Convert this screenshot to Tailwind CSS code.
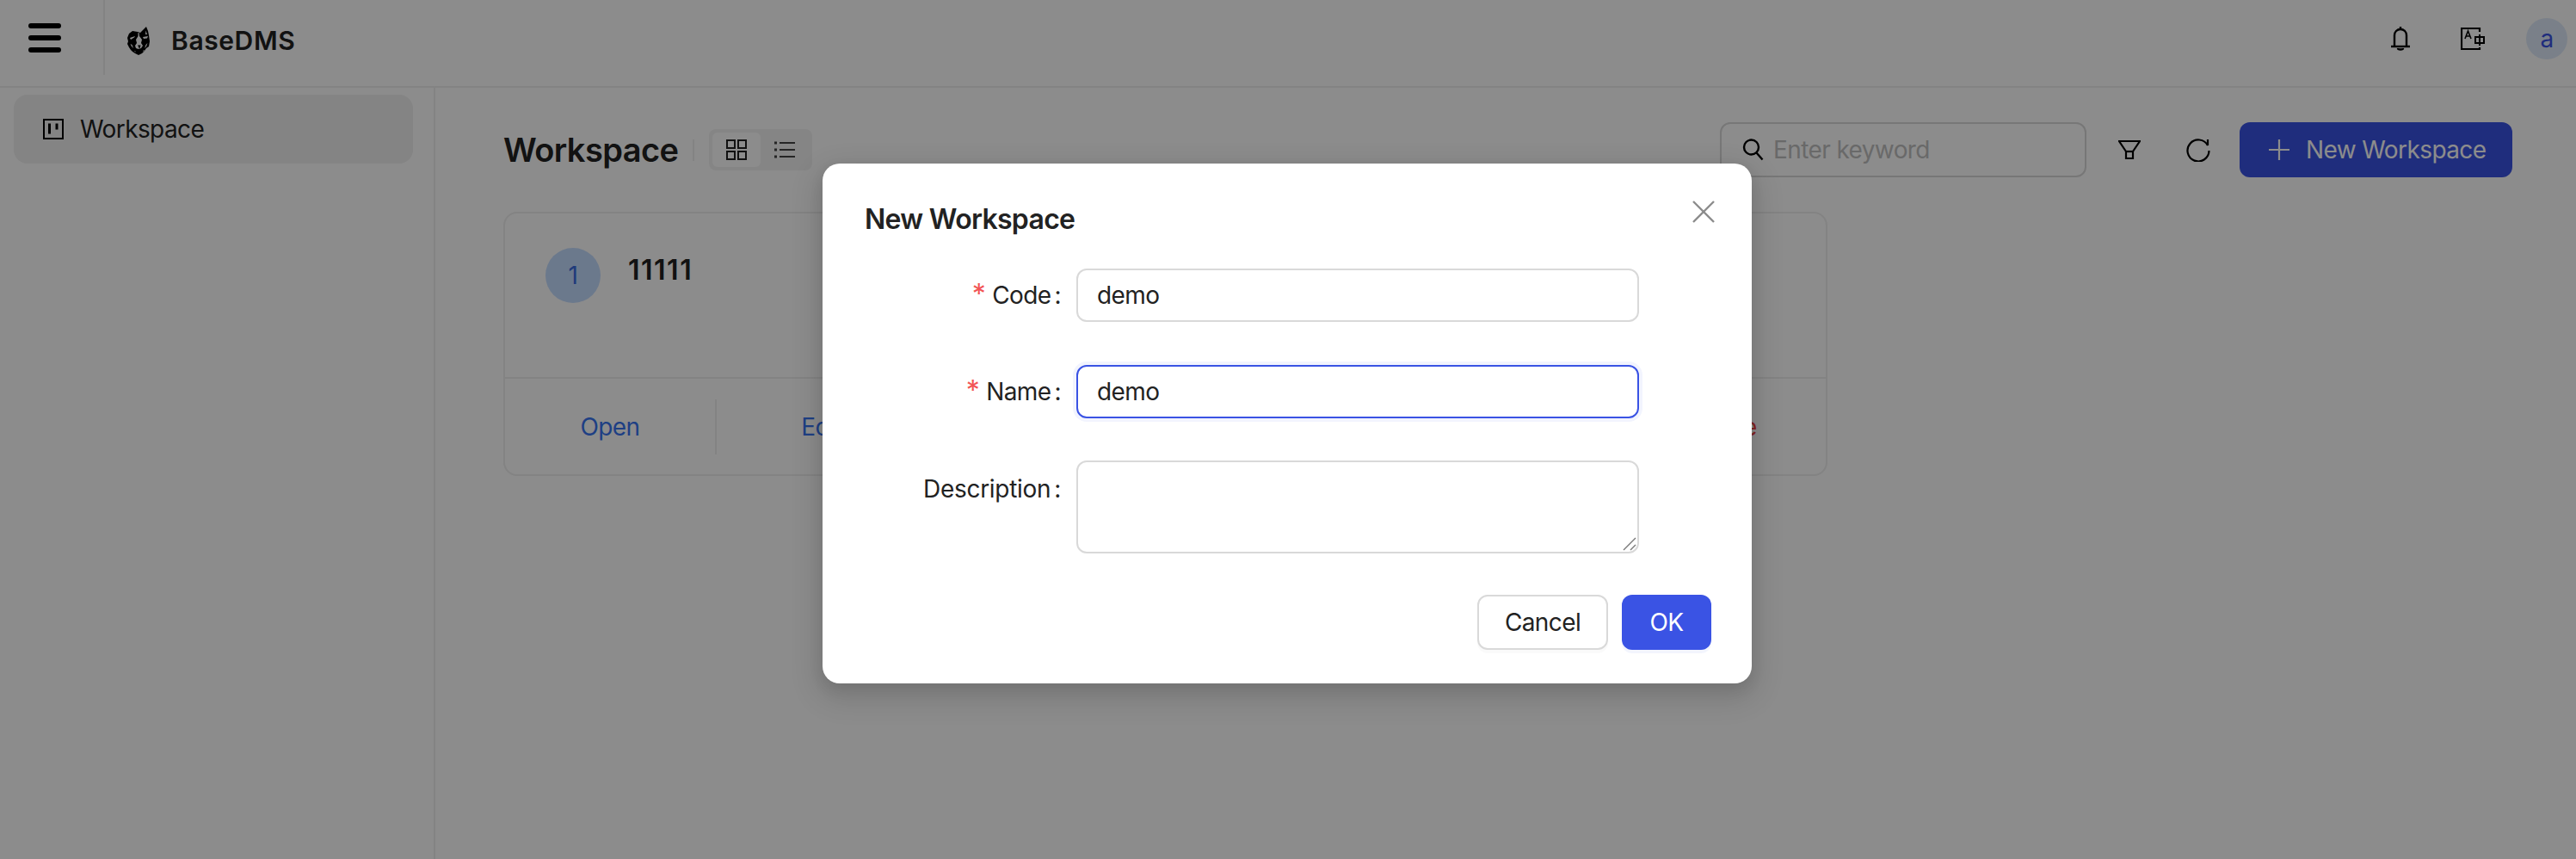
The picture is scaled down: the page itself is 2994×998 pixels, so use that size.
<!DOCTYPE html>
<html lang="en">

<head>
  <meta charset="UTF-8">
  <meta name="viewport" content="width=device-width, initial-scale=1.0">
  <title>BaseDMS Workspace</title>
  <script src="https://cdn.jsdelivr.net/npm/@tailwindcss/browser@4"></script>
</head>

<body class="bg-white text-[#222222] font-['Inter',sans-serif] overflow-hidden">
  <div class="relative w-[2994px] h-[998px] overflow-hidden tracking-[-0.6px]">
    <!-- Header -->
    <header class="flex items-start h-[102px] border-b-2 border-[#eeeeee]">
      <div class="flex items-center w-[122px] h-[87px] pl-[33px] border-r-2 border-[#eeeeee]">
        <svg width="38" height="34" viewBox="0 0 38 34" class="text-black">
          <rect x="0" y="0" width="38" height="6" rx="3" fill="currentColor" />
          <rect x="0" y="14" width="38" height="6" rx="3" fill="currentColor" />
          <rect x="0" y="28" width="38" height="6" rx="3" fill="currentColor" />
        </svg>
      </div>
      <div class="flex items-center h-[94px] pl-[26px] gap-[24px]">
        <svg width="27" height="33" viewBox="0 0 27 33">
          <path fill="#000" d="M2 8l4-3 6 1 3 1 3-3 4-4 2 5 1 5 1 7-1 6-3 2-2 3-3 3-4 2-4-2-3-2-2-2-2-3-2-4 1-3-1-4z" />
          <path fill="#fff" d="M12.500 7h1l.5 4 3 4-1 4 2 3-2 3-3 1-3-1-1-3 2-3-1-4 2.500-4z" />
          <path fill="#000" d="M12 21.500h3.500l-.5 2-1 2.500-1-2.500z" />
          <path fill="#fff" d="M3 13l6-2-1 1.500-4 2.500zM18 12l6-1-1 2.500-4 .5zM21.500 4.500l1.500 4.500h-2z" />
          <path fill="#fff" d="M3.500 20l2 1 1.500 4-2-2zM23.500 19l-2 2-1.500 4 2-2zM8 28l2 1-1 .5zM19 27l-1 2 2-1z" />
        </svg>
        <span class="text-[30px] font-semibold tracking-[0.6px]">BaseDMS</span>
      </div>
      <div class="flex items-center ml-auto h-[90px] pr-[10px]">
        <svg width="22" height="28" viewBox="0 0 22 28" fill="none" stroke="#000" stroke-width="2.4" class="mr-[59px]">
          <path d="M4 23V10c0-4 3-7 7-7s7 3 7 7v13" />
          <path d="M0 23h22" />
          <path d="M11 0v3" />
          <path d="M8 25c0 2 6 2 6 0" />
        </svg>
        <svg width="28" height="26" viewBox="0 0 28 26" fill="none" stroke="#000" stroke-width="2.2" class="mr-[48px]">
          <path d="M22 5V1H1v24h21v-2" />
          <path d="M5 13l3.500-9 3.500 9M6.500 10h4" stroke-width="1.600" />
          <rect x="17" y="11" width="10" height="7" stroke-width="2" />
          <path d="M22 8v13" stroke-width="2" />
        </svg>
        <div class="flex items-center justify-center w-[48px] h-[48px] rounded-full bg-[#dfeafa] text-[#3a53e4] text-[28px]">a</div>
      </div>
    </header>

    <div class="flex h-[896px]">
      <!-- Sidebar -->
      <aside class="w-[506px] shrink-0 pl-[16px] pr-[24px] pt-[8px] border-r-2 border-[#eeeeee]">
        <div class="flex items-center h-[80px] pl-[34px] gap-[19px] rounded-[16px] bg-[#f0f0f0] text-[28px]">
          <svg width="24" height="24" viewBox="0 0 24 24" fill="none" stroke="#000" stroke-width="2">
            <rect x="1" y="1" width="22" height="22" />
            <path d="M7.500 5.500v12M16 5.500v7" stroke-width="3" />
          </svg>
          <span>Workspace</span>
        </div>
      </aside>

      <!-- Main content -->
      <main class="flex-1 pl-[79px] pr-[74px] pt-[40px]">
        <div class="flex items-center h-[64px]">
          <h1 class="text-[38px] font-semibold leading-none">Workspace</h1>
          <div class="w-[2px] h-[25px] ml-[17px] mr-[17px] bg-[#eeeeee]"></div>
          <div class="flex w-[120px] h-[48px] p-[4px] rounded-[8px] bg-[#f3f3f3]">
            <div class="flex items-center justify-center w-[56px] h-[40px] rounded-[6px] bg-white">
              <svg width="24" height="24" viewBox="0 0 24 24" fill="none" stroke="#222" stroke-width="2">
                <rect x="1" y="1" width="9" height="9" />
                <rect x="14" y="1" width="9" height="9" />
                <rect x="1" y="14" width="9" height="9" />
                <rect x="14" y="14" width="9" height="9" />
              </svg>
            </div>
            <div class="flex items-center justify-center w-[56px] h-[40px]">
              <svg width="24" height="20" viewBox="0 0 24 20" fill="none" stroke="#444" stroke-width="2">
                <path d="M6 2h18M6 10h18M6 18h18" />
                <path d="M0 2h3M0 10h3M0 18h3" stroke-width="3" />
              </svg>
            </div>
          </div>

          <div class="flex items-center ml-auto">
            <div class="flex items-center w-[426px] h-[64px] pl-[23px] gap-[9px] rounded-[12px] border-2 border-[#d9d9d9] text-[28px] text-[#bfbfbf]">
              <svg width="28" height="28" viewBox="0 0 28 28" fill="none" stroke="#000" stroke-width="2.400">
                <circle cx="11.500" cy="11" r="8.500" />
                <path d="M17.500 17.500l7 8" />
              </svg>
              <span>Enter keyword</span>
            </div>
            <svg width="26" height="22" viewBox="0 0 26 22" fill="none" stroke="#000" stroke-width="2.200" class="ml-[37px]">
              <path d="M1 1h24l-8 12v8H9v-8z" />
              <path d="M9 13h8" />
            </svg>
            <svg width="28" height="28" viewBox="0 0 28 28" fill="none" stroke="#000" stroke-width="2.200" class="ml-[53px]">
              <path d="M25 9A12.500 12.500 0 1 0 26.500 15" />
              <path d="M25 2v7" />
            </svg>
            <button class="flex items-center w-[317px] h-[64px] ml-[34px] pl-[34px] gap-[19px] rounded-[12px] bg-[#3a53e4] text-white text-[28px]">
              <svg width="24" height="24" viewBox="0 0 24 24" fill="none" stroke="#fff" stroke-width="2.200">
                <path d="M12 0v24M0 12h24" />
              </svg>
              <span>New Workspace</span>
            </button>
          </div>
        </div>

        <!-- Workspace card -->
        <div class="flex flex-col w-[1539px] h-[307px] mt-[40px] rounded-[16px] border-2 border-[#eeeeee]">
          <div class="flex h-[192px] pl-[47px] pt-[40px] border-b-2 border-[#eeeeee]">
            <div class="flex items-center justify-center w-[64px] h-[64px] rounded-full bg-[#c4dcff] text-[#3a6ce0] text-[28px]">1</div>
            <div class="ml-[32px] mt-[2px] text-[32px] font-semibold leading-[48px] tracking-[1.500px]">11111</div>
          </div>
          <div class="flex flex-1 items-center text-[28px] text-[#3874f0]">
            <div class="w-[246px] h-[64px] flex items-center justify-center border-r-2 border-[#eeeeee]">Open</div>
            <div class="w-[244px] text-center">Edit</div>
            <div class="w-[242px] ml-auto text-center text-[#ef4444]">Delete</div>
          </div>
        </div>
      </main>
    </div>

    <!-- Modal overlay -->
    <div class="absolute inset-0 flex justify-center pr-[2px] pt-[190px] bg-black/45">
      <div class="relative w-[1080px] h-[604px] pl-[49px] pt-[46px] rounded-[20px] bg-white shadow-[0_12px_32px_8px_rgba(0,0,0,0.12),0_6px_16px_0_rgba(0,0,0,0.08)]">
        <svg width="26" height="26" viewBox="0 0 26 26" fill="none" stroke="#8c8c8c" stroke-width="2.400" class="absolute left-[1011px] top-[43px]">
          <path d="M1 1l24 24M25 1L1 25" />
        </svg>
        <h2 class="text-[32px] font-semibold leading-[38px] tracking-[-0.7px]">New Workspace</h2>

        <form class="mt-[37px] text-[28px]">
          <div class="flex items-center h-[64px] mb-[48px]">
            <label class="w-[228px] mr-[18px] text-right"><span class="text-[#f25555] text-[32px] leading-none mr-[8px]">*</span>Code<span class="ml-[4px]">:</span></label>
            <input value="demo" class="w-[654px] h-[62px] px-[22px] rounded-[12px] border-2 border-[#d9d9d9] outline-none">
          </div>
          <div class="flex items-center h-[64px] mb-[48px]">
            <label class="w-[228px] mr-[18px] text-right"><span class="text-[#f25555] text-[32px] leading-none mr-[8px]">*</span>Name<span class="ml-[4px]">:</span></label>
            <input value="demo" class="w-[654px] h-[62px] px-[22px] rounded-[12px] border-2 border-[#3a53e4] outline-none shadow-[0_0_0_4px_#f2f4fe]">
          </div>
          <div class="flex items-start h-[108px]">
            <label class="w-[228px] mr-[18px] pt-[12px] text-right tracking-[-0.3px]">Description<span class="ml-[4px]">:</span></label>
            <div class="relative">
              <textarea class="block w-[654px] h-[108px] px-[22px] py-[10px] rounded-[12px] border-2 border-[#d9d9d9] outline-none resize-none"></textarea>
              <!-- resize grip -->
              <svg width="16" height="16" viewBox="0 0 16 16" fill="none" stroke="#777777" stroke-width="1.400" class="absolute right-[3px] bottom-[3px]">
                <path d="M1 15L15 1M9 15l6-6" />
              </svg>
            </div>
          </div>
        </form>

        <div class="flex justify-end gap-[16px] mt-[48px] pr-[47px] text-[28px]">
          <button class="w-[152px] h-[64px] rounded-[12px] border-2 border-[#d9d9d9] bg-white shadow-[0_4px_0_rgba(0,0,0,0.02)]">Cancel</button>
          <button class="w-[104px] h-[64px] rounded-[12px] bg-[#3a53e4] text-white shadow-[0_4px_0_rgba(58,83,228,0.06)]">OK</button>
        </div>
      </div>
    </div>
  </div>
</body>

</html>
